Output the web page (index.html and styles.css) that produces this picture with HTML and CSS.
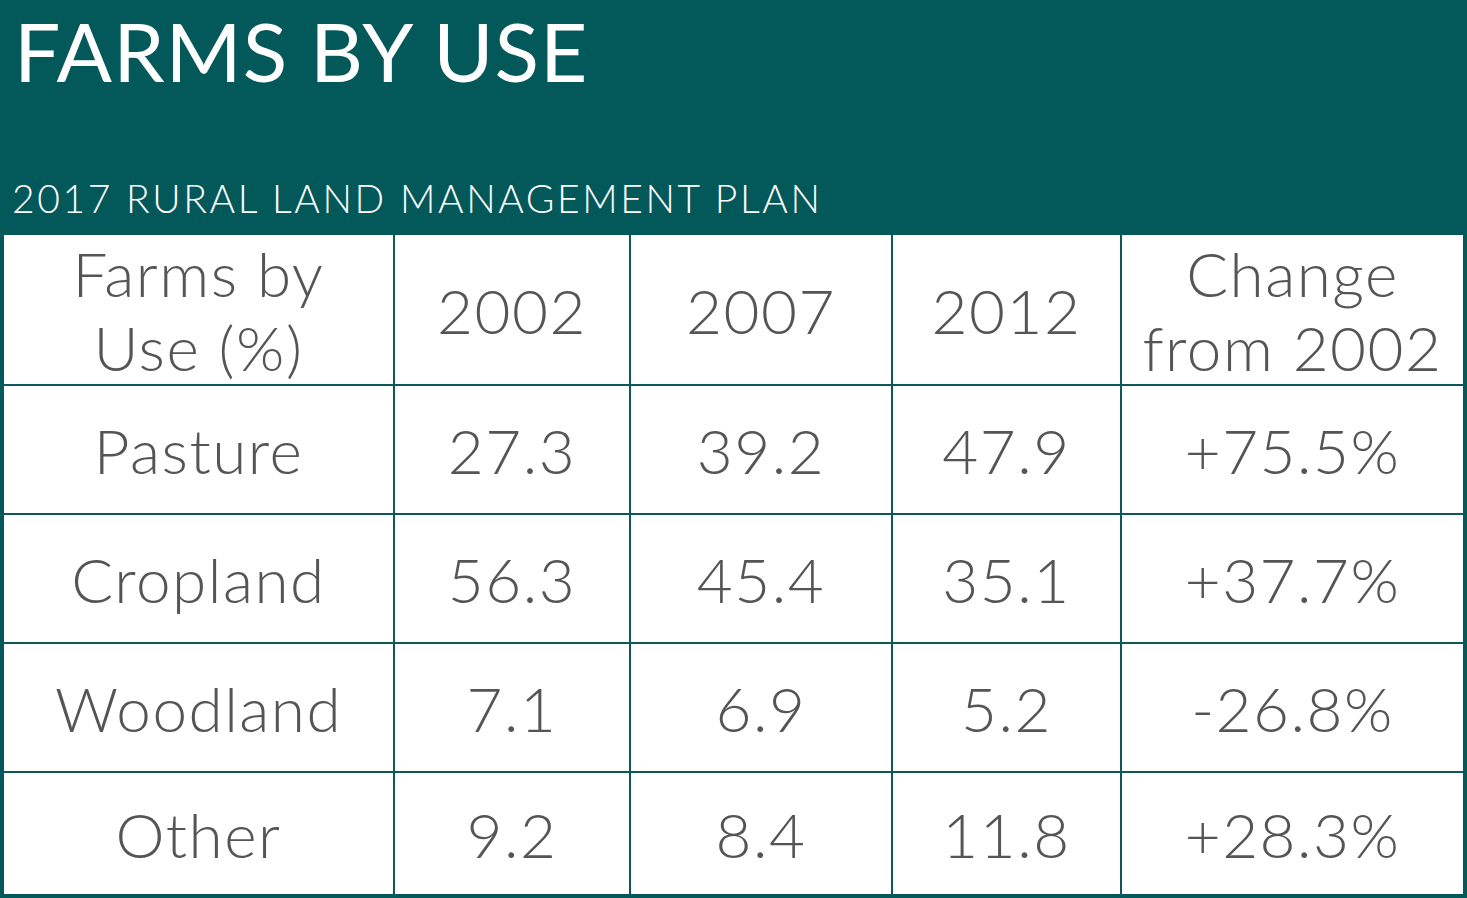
FILE: index.html
```html
<!DOCTYPE html>
<html>
<head>
<meta charset="utf-8">
<link rel="stylesheet" href="styles.css">
</head>
<body>
<div class="page">
  <header class="head">
    <h1 class="title">FARMS BY USE</h1>
    <p class="subtitle">2017 RURAL LAND MANAGEMENT PLAN</p>
  </header>
  <table class="data">
    <colgroup>
      <col class="c1"><col class="c2"><col class="c3"><col class="c4"><col class="c5">
    </colgroup>
    <tr class="hrow">
      <td>Farms by<br>Use (%)</td>
      <td>2002</td>
      <td>2007</td>
      <td>2012</td>
      <td>Change<br>from 2002</td>
    </tr>
    <tr class="row"><td>Pasture</td><td>27.3</td><td>39.2</td><td>47.9</td><td>+75.5%</td></tr>
    <tr class="row"><td>Cropland</td><td>56.3</td><td>45.4</td><td>35.1</td><td>+37.7%</td></tr>
    <tr class="row"><td>Woodland</td><td>7.1</td><td>6.9</td><td>5.2</td><td>-26.8%</td></tr>
    <tr class="row last"><td>Other</td><td>9.2</td><td>8.4</td><td>11.8</td><td>+28.3%</td></tr>
  </table>
</div>
</body>
</html>
```

FILE: styles.css
```css
html, body {
  margin: 0;
  padding: 0;
  background: #03585a;
}
.page {
  width: 1467px;
  height: 898px;
  overflow: hidden;
  font-family: Lato, "Open Sans", sans-serif;
}
.head {
  padding: 2px 14px 0 14px;
  color: #ffffff;
}
.title {
  margin: 0;
  font-weight: 400;
  font-size: 82px;
  line-height: 96px;
  letter-spacing: 1px;
}
.subtitle {
  margin: 78px 0 0 -2px;
  font-size: 39px;
  font-weight: 300;
  line-height: 44px;
  letter-spacing: 2.6px;
  white-space: nowrap;
}
.data {
  margin: 15px 0 0 4px;
  width: 1459px;
  border-collapse: collapse;
  background: #ffffff;
  table-layout: fixed;
}
.c1 { width: 390px; }
.c2 { width: 236px; }
.c3 { width: 262px; }
.c4 { width: 229px; }
.c5 { width: 342px; }
.data td {
  border: 2px solid #0d5858;
  text-align: center;
  vertical-align: middle;
  color: #555555;
  font-size: 62px;
  font-weight: 300;
  line-height: 74px;
  padding: 0;
  letter-spacing: 1.5px;
}
.data tr:first-child td { border-top: none; }
.data td:first-child { border-left: none; }
.data td:last-child { border-right: none; }
.hrow td { height: 149px; }
.row td { height: 127px; }
.row.last td { height: 121px; border-bottom: none; }
```
